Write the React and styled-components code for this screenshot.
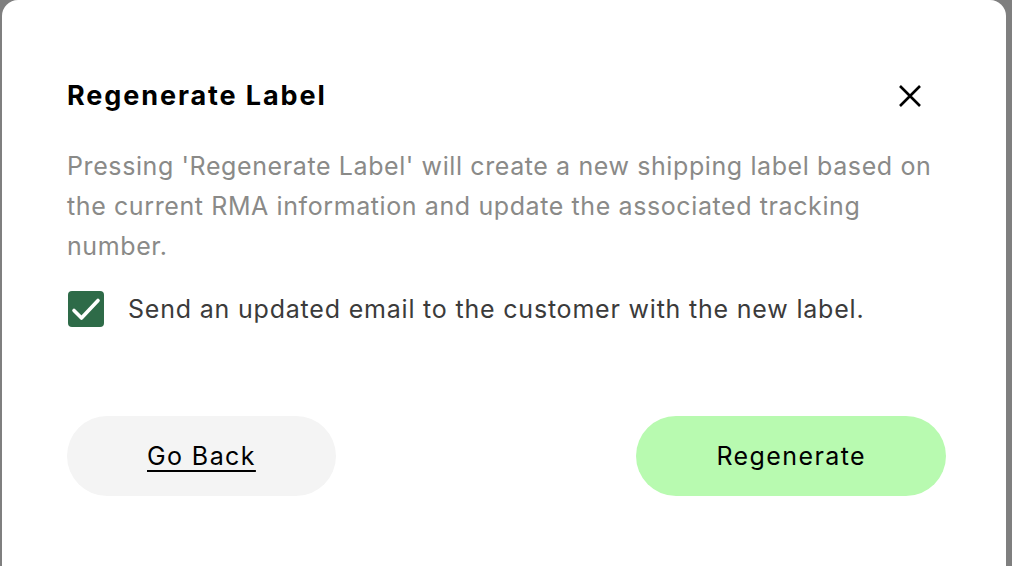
import React, { useState } from 'react';
import styled, { createGlobalStyle } from 'styled-components';

const GlobalStyle = createGlobalStyle`
  html, body {
    margin: 0;
    padding: 0;
    height: 100%;
    overflow: hidden;
    background: #7f7f7f;
    font-family: Inter, "Noto Sans", sans-serif;
  }
  #root {
    height: 100%;
  }
`;

const Overlay = styled.div`
  height: 100%;
  display: flex;
  padding: 0 6px 0 2px;
  box-sizing: border-box;
`;

const Modal = styled.div`
  flex: 1;
  background: #ffffff;
  border-radius: 16px 16px 0 0;
  padding: 80px 60px 0 65px;
  display: flex;
  flex-direction: column;
`;

const Header = styled.div`
  display: flex;
  align-items: center;
  justify-content: space-between;
`;

const Title = styled.h2`
  margin: 0;
  font-size: 27px;
  line-height: 32px;
  font-weight: 700;
  color: #000000;
  letter-spacing: 1.9px;
`;

const CloseButton = styled.button`
  all: unset;
  width: 24px;
  height: 24px;
  margin-right: 24px;
  display: flex;
  align-items: center;
  justify-content: center;
  cursor: pointer;
`;

const Description = styled.p`
  margin: 34px 0 0;
  font-size: 25px;
  line-height: 40px;
  letter-spacing: 0.6px;
  color: #8a8a88;
`;

const CheckRow = styled.label`
  margin-top: 25px;
  display: flex;
  align-items: center;
  gap: 24px;
  cursor: pointer;
`;

const Box = styled.span`
  width: 36px;
  height: 36px;
  border-radius: 4px;
  margin-left: 1px;
  box-sizing: border-box;
  background: ${p => (p.$checked ? '#2e6b48' : '#ffffff')};
  border: ${p => (p.$checked ? 'none' : '2px solid #2e6b48')};
  display: flex;
  align-items: center;
  justify-content: center;
  flex-shrink: 0;
`;

const CheckText = styled.span`
  font-size: 25px;
  line-height: 32px;
  letter-spacing: 0.8px;
  color: #3b3b3b;
`;

const Actions = styled.div`
  margin-top: 89px;
  display: flex;
  justify-content: space-between;
`;

const PillButton = styled.button`
  all: unset;
  height: 80px;
  padding: 0 80px;
  border-radius: 40px;
  display: flex;
  align-items: center;
  justify-content: center;
  font-family: Inter, "Noto Sans", sans-serif;
  font-size: 25px;
  letter-spacing: 1.4px;
  color: #000000;
  cursor: pointer;
  background: ${p => (p.$primary ? '#b8fab0' : '#f4f4f4')};
  text-decoration: ${p => (p.$primary ? 'none' : 'underline')};
  text-underline-offset: 5px;
  text-decoration-thickness: 2px;
`;

const App = () => {
  const [checked, setChecked] = useState(true);

  return (
    <>
      <GlobalStyle />
      <Overlay>
        <Modal>
          <Header>
            <Title>Regenerate Label</Title>
            <CloseButton aria-label="Close">
              <svg width="24" height="24" viewBox="0 0 24 24" fill="none">
                <path d="M2 2L22 22M22 2L2 22" stroke="#000" strokeWidth="2.6" />
              </svg>
            </CloseButton>
          </Header>
          <Description>
            Pressing 'Regenerate Label' will create a new shipping label based on the current RMA
            information and update the associated tracking number.
          </Description>
          <CheckRow onClick={() => setChecked(c => !c)}>
            <Box $checked={checked}>
              {checked && (
                <svg width="36" height="36" viewBox="0 0 36 36" fill="none">
                  <path d="M6 19.5L13.5 27L30 9.5" stroke="#fff" strokeWidth="3.6" strokeLinecap="round" strokeLinejoin="round" />
                </svg>
              )}
            </Box>
            <CheckText>Send an updated email to the customer with the new label.</CheckText>
          </CheckRow>
          <Actions>
            <PillButton>Go Back</PillButton>
            <PillButton $primary>Regenerate</PillButton>
          </Actions>
        </Modal>
      </Overlay>
    </>
  );
};

export default App;
